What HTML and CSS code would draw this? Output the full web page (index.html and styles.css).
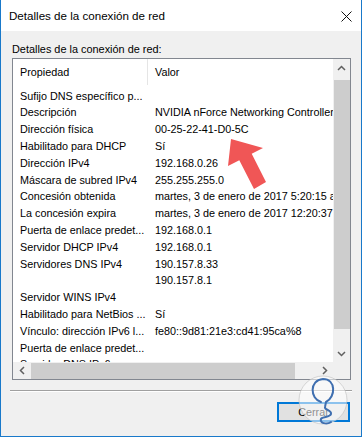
FILE: index.html
```html
<!DOCTYPE html>
<html lang="es">
<head>
	<meta charset="UTF-8">
	<meta name="viewport" content="width=device-width, initial-scale=1.0">
	<title>Detalles de la conexión de red</title>
	<link rel="stylesheet" href="styles.css">
</head>
<body>

	<div class="window">
		<!-- title bar -->
		<div class="titlebar">
			<span class="title">Detalles de la conexión de red</span>
			<svg class="close" width="11" height="11" viewBox="0 0 11 11">
				<path d="M0.5 0.5 L10.5 10.5 M10.5 0.5 L0.5 10.5" stroke="#111" stroke-width="1" fill="none"/>
			</svg>
		</div>

		<div class="client">
			<div class="caption">Detalles de la conexión de red:</div>

			<!-- list view -->
			<div class="listview">
				<div class="lv-main">
					<div class="lv-header">
						<div class="col col-prop">Propiedad</div>
						<div class="col col-val">Valor</div>
					</div>
					<div class="lv-rows">
						<div class="row"><span class="prop">Sufijo DNS específico p...</span><span class="val"></span></div>
						<div class="row"><span class="prop">Descripción</span><span class="val">NVIDIA nForce Networking Controller</span></div>
						<div class="row"><span class="prop">Dirección física</span><span class="val">00-25-22-41-D0-5C</span></div>
						<div class="row"><span class="prop">Habilitado para DHCP</span><span class="val">Sí</span></div>
						<div class="row"><span class="prop">Dirección IPv4</span><span class="val">192.168.0.26</span></div>
						<div class="row"><span class="prop">Máscara de subred IPv4</span><span class="val">255.255.255.0</span></div>
						<div class="row"><span class="prop">Concesión obtenida</span><span class="val">martes, 3 de enero de 2017 5:20:15 a.m.</span></div>
						<div class="row"><span class="prop">La concesión expira</span><span class="val">martes, 3 de enero de 2017 12:20:37 p.m.</span></div>
						<div class="row"><span class="prop">Puerta de enlace predet...</span><span class="val">192.168.0.1</span></div>
						<div class="row"><span class="prop">Servidor DHCP IPv4</span><span class="val">192.168.0.1</span></div>
						<div class="row"><span class="prop">Servidores DNS IPv4</span><span class="val">190.157.8.33</span></div>
						<div class="row"><span class="prop"></span><span class="val">190.157.8.1</span></div>
						<div class="row"><span class="prop">Servidor WINS IPv4</span><span class="val"></span></div>
						<div class="row"><span class="prop">Habilitado para NetBios ...</span><span class="val">Sí</span></div>
						<div class="row"><span class="prop">Vínculo: dirección IPv6 l...</span><span class="val">fe80::9d81:21e3:cd41:95ca%8</span></div>
						<div class="row"><span class="prop">Puerta de enlace predet...</span><span class="val"></span></div>
						<div class="row"><span class="prop">Servidor DNS IPv6</span><span class="val"></span></div>
					</div>
				</div>

				<div class="vscroll">
					<div class="sb-btn">
						<svg width="9" height="6" viewBox="0 0 9 6"><polyline points="1,5 4.5,1.5 8,5" stroke="#606060" stroke-width="1.5" fill="none"/></svg>
					</div>
					<div class="sb-track"><div class="sb-thumb"></div></div>
					<div class="sb-btn">
						<svg width="9" height="6" viewBox="0 0 9 6"><polyline points="1,1 4.5,4.5 8,1" stroke="#606060" stroke-width="1.5" fill="none"/></svg>
					</div>
				</div>

				<div class="hscroll">
					<div class="sb-btn">
						<svg width="6" height="9" viewBox="0 0 6 9"><polyline points="5,1 1.5,4.5 5,8" stroke="#606060" stroke-width="1.5" fill="none"/></svg>
					</div>
					<div class="sb-track"><div class="sb-thumb"></div></div>
					<div class="sb-btn">
						<svg width="6" height="9" viewBox="0 0 6 9"><polyline points="1,1 4.5,4.5 1,8" stroke="#606060" stroke-width="1.5" fill="none"/></svg>
					</div>
				</div>

				<div class="corner"></div>
			</div>

			<div class="separator"></div>

			<div class="actions">
				<button class="btn">Cerrar</button>
			</div>
		</div>
	</div>

	<!-- red pointer arrow -->
	<svg class="arrow" width="362" height="438" viewBox="0 0 362 438">
		<polygon points="231,139 263,148 251.7,153.8 266,182 254,189 239.3,160.2 228,166" fill="#f05656"/>
	</svg>

	<!-- watermark -->
	<svg class="watermark" width="52" height="58" viewBox="0 0 52 58">
		<circle cx="26" cy="28" r="24" fill="rgba(255,255,255,0.55)" stroke="rgba(190,190,190,0.6)" stroke-width="1"/>
		<path d="M24 30 C13 27, 12 8, 26 7 C39 7, 39 25, 29 30 L28 35 C27 38, 35 38, 34 42 C33 46, 22 44, 24 49 C25 52, 31 52, 34 50" stroke="#3f6fb0" stroke-width="2" fill="none" stroke-linecap="round"/>
	</svg>

</body>
</html>
```

FILE: styles.css
```css
:root{
	--winborder: #1979ca;
	--face: #f0f0f0;
	--lvborder: #828790;
	--sbtrack: #f0f0f0;
	--sbthumb: #cdcdcd;
	--accent: #0078d7;
}
*{
	box-sizing: border-box;
}
body {
	font-family: "Liberation Sans", Arial, sans-serif;
	margin: 0;
	background-color: #fff;
	color: #000;
	position: relative;
}

.window {
	width: 362px;
	height: 437px;
	border: 1px solid var(--winborder);
	border-top: none;
	display: flex;
	flex-direction: column;
	background-color: var(--face);
}

.titlebar {
	height: 31px;
	flex: none;
	background-color: #fff;
	display: flex;
	align-items: center;
	justify-content: space-between;
	padding: 0 9px 0 8px;
}
.title {
	font-size: 11.6px;
}
.close {
	margin-top: 1px;
}

.client {
	flex: 1;
	display: flex;
	flex-direction: column;
	padding: 10px 10px 0 11px;
}

.caption {
	font-size: 10.9px;
	line-height: 17px;
	height: 17px;
}

/* list view */
.listview {
	width: 339px;
	height: 322px;
	border: 1px solid var(--lvborder);
	background-color: #fff;
	display: grid;
	grid-template-columns: 320px 17px;
	grid-template-rows: 303px 17px;
	font-size: 10.8px;
}
.lv-main {
	overflow: hidden;
}
.lv-header {
	display: flex;
	height: 26px;
	align-items: stretch;
}
.lv-header .col {
	display: flex;
	align-items: center;
	padding-left: 7px;
}
.lv-header .col-prop {
	width: 135px;
	flex: none;
	border-right: 1px solid #e5e5e5;
}
.lv-rows {
	padding-top: 2.6px;
}
.row {
	display: flex;
	height: 16.8px;
	line-height: 16.8px;
	white-space: nowrap;
}
.row .prop {
	width: 135px;
	flex: none;
	padding-left: 7px;
	overflow: hidden;
}
.row .val {
	padding-left: 7px;
}

/* scrollbars */
.vscroll, .hscroll {
	display: flex;
	background-color: var(--sbtrack);
}
.vscroll {
	flex-direction: column;
}
.sb-btn {
	width: 17px;
	height: 17px;
	flex: none;
	display: flex;
	align-items: center;
	justify-content: center;
}
.sb-track {
	flex: 1;
	display: flex;
}
.vscroll .sb-track {
	flex-direction: column;
}
.vscroll .sb-thumb {
	margin-top: 4px;
	height: 249px;
	margin-left: 1px;
	background-color: var(--sbthumb);
}
.hscroll .sb-thumb {
	margin-left: 1px;
	width: 264px;
	margin-top: 1px;
	background-color: var(--sbthumb);
}
.corner {
	background-color: var(--sbtrack);
}

.separator {
	margin: 10px -1px 0 -2px;
	height: 2px;
	border-top: 1px solid #a0a0a0;
	border-bottom: 1px solid #fff;
}

.actions {
	display: flex;
	justify-content: flex-end;
	padding-top: 10px;
	padding-right: 1px;
}
.btn {
	width: 73px;
	height: 20px;
	border: 2px solid var(--accent);
	background-color: #e1e1e1;
	font-family: "Liberation Sans", Arial, sans-serif;
	font-size: 10.8px;
	color: #000;
	padding: 0;
}

/* overlays */
.arrow {
	position: absolute;
	left: 0;
	top: 0;
	pointer-events: none;
}
.watermark {
	position: absolute;
	left: 297px;
	top: 372px;
	pointer-events: none;
}
```
